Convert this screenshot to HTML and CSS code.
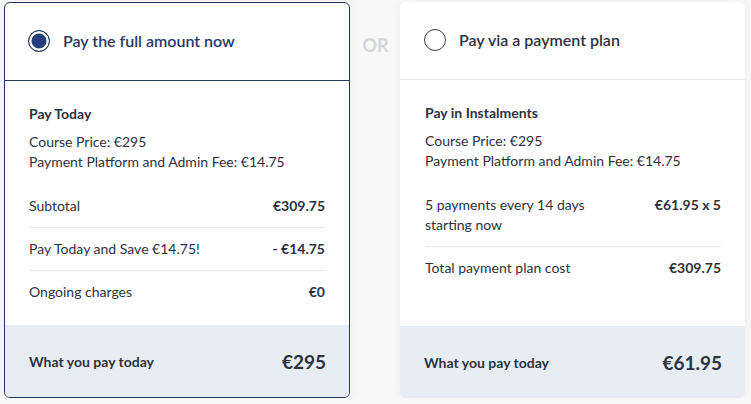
FILE: index.html
```html
<!DOCTYPE html>
<html lang="en">
<head>
    <meta charset="UTF-8">
    <meta name="viewport" content="width=device-width, initial-scale=1.0">
    <title>Payment options</title>
    <link rel="stylesheet" href="styles.css">
</head>
<body>
    <div class="options">
        <div class="card selected">
            <div class="card-head">
                <span class="radio"></span>
                <span class="card-title">Pay the full amount now</span>
            </div>
            <div class="card-body">
                <h3>Pay Today</h3>
                <p class="info">Course Price: €295<br>Payment Platform and Admin Fee: €14.75</p>
                <div class="rows">
                    <div class="row"><span>Subtotal</span><b>€309.75</b></div>
                    <div class="row"><span>Pay Today and Save €14.75!</span><b>- €14.75</b></div>
                    <div class="row"><span>Ongoing charges</span><b>€0</b></div>
                </div>
            </div>
            <div class="card-foot">
                <span>What you pay today</span>
                <span class="total">€295</span>
            </div>
        </div>

        <div class="or">OR</div>

        <div class="card">
            <div class="card-head">
                <span class="radio"></span>
                <span class="card-title">Pay via a payment plan</span>
            </div>
            <div class="card-body">
                <h3>Pay in Instalments</h3>
                <p class="info">Course Price: €295<br>Payment Platform and Admin Fee: €14.75</p>
                <div class="rows">
                    <div class="row"><span>5 payments every 14 days<br>starting now</span><b>€61.95 x 5</b></div>
                    <div class="row"><span>Total payment plan cost</span><b>€309.75</b></div>
                </div>
            </div>
            <div class="card-foot">
                <span>What you pay today</span>
                <span class="total">€61.95</span>
            </div>
        </div>
    </div>
</body>
</html>
```

FILE: styles.css
```css
body {
    margin: 0;
    background: #f8f8f9;
    font-family: 'Lato', 'Open Sans', sans-serif;
    color: #2c3241;
}
.options {
    display: flex;
    align-items: flex-start;
    padding: 2px 0 0 4px;
}
.card {
    width: 345px;
    height: 396px;
    background: white;
    border-radius: 6px;
    display: flex;
    flex-direction: column;
    box-shadow: 0 0 12px rgba(0, 0, 0, 0.05);
    box-sizing: border-box;
    overflow: hidden;
}
.card.selected {
    width: 346px;
    border: 1px solid #27375c;
}
.card-head {
    height: 78px;
    display: flex;
    align-items: center;
    padding-left: 24px;
    border-bottom: 1px solid #e6e7ea;
    box-sizing: border-box;
}
.selected .card-head {
    padding-left: 23px;
    border-bottom-color: #27375c;
}
.radio {
    width: 22px;
    height: 22px;
    border: 1.5px solid #3a3f4a;
    border-radius: 50%;
    box-sizing: border-box;
    margin-right: 13px;
    margin-top: -2px;
}
.selected .radio {
    border-color: #27375c;
    background: #233f7c;
    box-shadow: inset 0 0 0 2.5px white;
}
.card-title {
    font-size: 16px;
    font-weight: 600;
    color: #2c3241;
    margin-top: -2px;
}
.selected .card-title {
    color: #243a6b;
}
.card-body {
    flex: 1;
    padding: 23px 24px 0 25px;
}
.selected .card-body {
    padding: 23px 24px 0 24px;
}
h3 {
    margin: 0;
    font-size: 14px;
    font-weight: 700;
    line-height: 20px;
}
.info {
    margin: 8px 0 13px;
    font-size: 14px;
    line-height: 20px;
}
.rows {
    font-size: 14px;
}
.row {
    display: flex;
    justify-content: space-between;
    align-items: flex-start;
    line-height: 20px;
    padding: 11px 0;
    border-bottom: 1px solid #e6e7ea;
}
.row:last-child {
    border-bottom: none;
}
.row b {
    font-weight: 700;
}
.card-foot {
    height: 72px;
    background: #e8edf4;
    display: flex;
    justify-content: space-between;
    align-items: center;
    padding: 0 23px 0 24px;
    font-size: 14px;
    font-weight: 700;
    flex-shrink: 0;
}
.card-foot .total {
    font-size: 19px;
    font-weight: 700;
}
.or {
    width: 51px;
    flex-shrink: 0;
    text-align: center;
    padding-top: 32px;
    font-size: 18px;
    font-weight: 700;
    color: #d4d5d8;
    margin-right: -1px;
}
```
